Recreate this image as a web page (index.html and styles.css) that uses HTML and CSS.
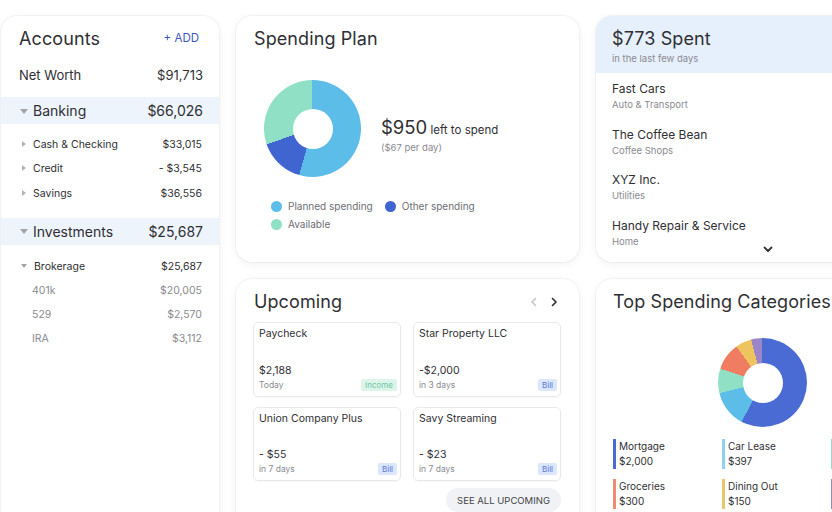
FILE: index.html
```html
<!DOCTYPE html>
<html lang="en">
	<head>
		<meta charset="UTF-8">
		<meta name="viewport" content="width=device-width, initial-scale=1.0">
		<title>Dashboard</title>
		<link rel="stylesheet" href="styles.css">
	</head>
	<body>
		<div class="page">
			<section class="card accounts">
				<div class="card-head">
					<h2>Accounts</h2>
					<a class="add" href="#">+ ADD</a>
				</div>
				<div class="row net"><span>Net Worth</span><span>$91,713</span></div>

				<div class="group-head"><span><i class="caret down"></i>Banking</span><span>$66,026</span></div>
				<div class="rows banking">
					<div class="row sub"><span><i class="caret right"></i>Cash &amp; Checking</span><span>$33,015</span></div>
					<div class="row sub"><span><i class="caret right"></i>Credit</span><span>- $3,545</span></div>
					<div class="row sub"><span><i class="caret right"></i>Savings</span><span>$36,556</span></div>
				</div>

				<div class="group-head"><span><i class="caret down"></i>Investments</span><span>$25,687</span></div>
				<div class="rows invest">
					<div class="row sub"><span><i class="caret down small"></i>Brokerage</span><span>$25,687</span></div>
					<div class="row leaf"><span>401k</span><span>$20,005</span></div>
					<div class="row leaf"><span>529</span><span>$2,570</span></div>
					<div class="row leaf"><span>IRA</span><span>$3,112</span></div>
				</div>
			</section>

			<section class="card plan">
				<div class="card-head"><h2>Spending Plan</h2></div>
				<div class="plan-body">
					<div class="donut plan-donut"></div>
					<div class="left">
						<p><span class="big">$950</span> left to spend</p>
						<p class="muted">($67 per day)</p>
					</div>
				</div>
				<ul class="legend">
					<li><i class="dot planned"></i>Planned spending</li>
					<li><i class="dot other"></i>Other spending</li>
					<li><i class="dot avail"></i>Available</li>
				</ul>
			</section>

			<section class="card spent">
				<div class="spent-head">
					<h2>$773 Spent</h2>
					<p class="muted">in the last few days</p>
				</div>
				<ul class="tx">
					<li><b>Fast Cars</b><span>Auto &amp; Transport</span></li>
					<li><b>The Coffee Bean</b><span>Coffee Shops</span></li>
					<li><b>XYZ Inc.</b><span>Utilities</span></li>
					<li><b>Handy Repair &amp; Service</b><span>Home</span></li>
				</ul>
				<div class="more">
					<svg width="10" height="7" viewBox="0 0 10 7"><path d="M1.5 1.5 5 5 8.5 1.5" fill="none" stroke="#333" stroke-width="1.8" stroke-linecap="round" stroke-linejoin="round"/></svg>
				</div>
			</section>

			<section class="card upcoming">
				<div class="card-head">
					<h2>Upcoming</h2>
					<div class="arrows">
						<svg width="8" height="10" viewBox="0 0 8 10"><path d="M5.5 1.5 2 5 5.5 8.5" fill="none" stroke="#c4c4c4" stroke-width="1.5" stroke-linecap="round" stroke-linejoin="round"/></svg>
						<svg width="8" height="10" viewBox="0 0 8 10"><path d="M2.5 1.5 6 5 2.5 8.5" fill="none" stroke="#333" stroke-width="1.7" stroke-linecap="round" stroke-linejoin="round"/></svg>
					</div>
				</div>
				<div class="bills">
					<div class="bill">
						<p class="bill-name">Paycheck</p>
						<p class="bill-amt">$2,188</p>
						<div class="bill-foot"><span>Today</span><span class="tag income">Income</span></div>
					</div>
					<div class="bill">
						<p class="bill-name">Star Property LLC</p>
						<p class="bill-amt">-$2,000</p>
						<div class="bill-foot"><span>in 3 days</span><span class="tag">Bill</span></div>
					</div>
					<div class="bill">
						<p class="bill-name">Union Company Plus</p>
						<p class="bill-amt">- $55</p>
						<div class="bill-foot"><span>in 7 days</span><span class="tag">Bill</span></div>
					</div>
					<div class="bill">
						<p class="bill-name">Savy Streaming</p>
						<p class="bill-amt">- $23</p>
						<div class="bill-foot"><span>in 7 days</span><span class="tag">Bill</span></div>
					</div>
				</div>
				<div class="see-all"><button>SEE ALL UPCOMING</button></div>
			</section>

			<section class="card categories">
				<div class="card-head"><h2>Top Spending Categories</h2></div>
				<div class="donut cat-donut"></div>
				<ul class="cats">
					<li class="mortgage">Mortgage<span>$2,000</span></li>
					<li class="lease">Car Lease<span>$397</span></li>
					<li class="utilities"></li>
					<li class="groceries">Groceries<span>$300</span></li>
					<li class="dining">Dining Out<span>$150</span></li>
					<li class="shopping"></li>
				</ul>
			</section>
		</div>
	</body>
</html>
```

FILE: styles.css
```css
:root{
	--text:#2f2f33;
	--muted:#8a8a90;
	--blue:#4a6bd4;
	--light-blue:#5cbde9;
	--mint:#8fe0c5;
	--band:#eef4fc;
}
body{
	margin:0;
	background:#fff;
	color:var(--text);
	font-family:Inter, "Noto Sans", sans-serif;
	overflow:hidden;
}
h2,p,ul{
	margin:0;
	padding:0;
}
ul{
	list-style:none;
}
.page{
	display:grid;
	grid-template-columns:218px 343px 343px;
	grid-template-rows:246px 260px;
	column-gap:17px;
	row-gap:17px;
	padding:16px 0 0 1px;
	width:940px;
}
.card{
	background:#fff;
	border-radius:16px;
	box-shadow:0 0 0 1px rgba(0,0,0,0.035), 0 2px 8px rgba(0,0,0,0.06);
	overflow:hidden;
}
.card-head{
	display:flex;
	justify-content:space-between;
	align-items:center;
	height:24px;
	padding:10px 16px 0 18px;
}
h2{
	font-size:18px;
	font-weight:400;
	letter-spacing:0.1px;
}
.muted{
	color:var(--muted);
	font-size:10px;
}

/* accounts */
.accounts{
	grid-row:1 / 3;
	height:520px;
}
.add{
	color:#3d55c4;
	font-size:11.5px;
	text-decoration:none;
	margin-right:4px;
}
.row{
	display:flex;
	justify-content:space-between;
	align-items:center;
	padding:0 16px 0 18px;
}
.net{
	height:20px;
	margin-top:15px;
	font-size:13px;
}
.group-head{
	display:flex;
	justify-content:space-between;
	align-items:center;
	height:27px;
	margin-top:12px;
	padding:0 16px 0 19px;
	background:var(--band);
	font-size:14px;
}
.banking{
	margin:8px 0 12px;
}
.invest{
	margin-top:10px;
}
.sub{
	height:24.5px;
	font-size:10.5px;
}
.invest .row{
	height:24px;
}
.leaf{
	font-size:10.5px;
	color:var(--muted);
	padding-left:31px;
	padding-right:17px;
}
.sub{
	padding-right:17px;
	padding-left:20px;
}
.caret{
	display:inline-block;
	width:0;
	height:0;
	vertical-align:middle;
}
.caret.down{
	border-left:4px solid transparent;
	border-right:4px solid transparent;
	border-top:5px solid #a4a4a8;
	margin:-2px 5px 0 0;
}
.caret.down.small{
	border-left-width:3px;
	border-right-width:3px;
	border-top-width:4px;
	margin:-2px 7px 0 0;
}
.caret.right{
	border-top:3px solid transparent;
	border-bottom:3px solid transparent;
	border-left:4px solid #b4b4b8;
	margin:-2px 7px 0 1px;
}

/* donuts */
.donut{
	position:relative;
	border-radius:50%;
}
.donut::after{
	content:"";
	position:absolute;
	left:50%;
	top:50%;
	width:40px;
	height:40px;
	margin:-20px 0 0 -20px;
	border-radius:50%;
	background:#fff;
}

/* spending plan */
.plan-body{
	display:flex;
	align-items:center;
	gap:20px;
	margin:30px 0 0 28px;
}
.plan-donut{
	width:97px;
	height:97px;
	background:conic-gradient(var(--light-blue) 0 196deg, #4065d1 196deg 251deg, var(--mint) 251deg 360deg);
}
.left{
	margin-top:12px;
}
.left p{
	font-size:11.5px;
}
.left .big{
	font-size:18.5px;
}
.left .muted{
	margin-top:4px;
	font-size:9.5px;
}
.legend{
	display:flex;
	flex-wrap:wrap;
	width:230px;
	margin:23px 0 0 35px;
	font-size:10px;
	color:#6e6e74;
	row-gap:6px;
	column-gap:12px;
}
.legend li{
	display:flex;
	align-items:center;
	gap:6px;
	height:12px;
}
.dot{
	width:11px;
	height:11px;
	border-radius:50%;
}
.dot.planned{ background:var(--light-blue); }
.dot.other{ background:#3f63d1; }
.dot.avail{ background:var(--mint); }

/* spent */
.spent-head{
	background:#e6effc;
	height:57px;
	padding:12px 16px 0 16px;
	box-sizing:border-box;
}
.spent-head .muted{
	margin-top:4px;
	font-size:9.5px;
}
.tx{
	padding:8px 16px 0 16px;
}
.tx li{
	display:flex;
	flex-direction:column;
	height:45.5px;
}
.tx b{
	font-weight:400;
	font-size:12px;
	line-height:16px;
}
.tx span{
	font-size:9.5px;
	color:var(--muted);
	line-height:16px;
}
.more{
	margin:-26px 0 0 167px;
}

/* upcoming */
.arrows{
	display:flex;
	gap:12px;
	margin-right:5px;
	margin-top:2px;
}
.bills{
	display:grid;
	grid-template-columns:148px 148px;
	grid-template-rows:75px 74px;
	column-gap:12px;
	row-gap:10px;
	margin:9px 0 0 17px;
}
.bill{
	display:flex;
	flex-direction:column;
	border:1px solid #e9e9ec;
	border-radius:5px;
	box-shadow:0 1px 2px rgba(0,0,0,0.04);
	padding:4px 3px 5px 5px;
}
.bill-name{
	font-size:10.5px;
	line-height:14px;
}
.bill-amt{
	margin-top:auto;
	font-size:10.5px;
	line-height:14px;
}
.bill-foot{
	display:flex;
	justify-content:space-between;
	align-items:center;
	font-size:8.5px;
	color:var(--muted);
	margin-top:1px;
}
.tag{
	background:#dde7fb;
	color:#5475d8;
	border-radius:2px;
	padding:1px 4px;
	line-height:10px;
	font-size:8px;
}
.tag.income{
	background:#ddf4eb;
	color:#6cc7a4;
}
.see-all{
	display:flex;
	justify-content:flex-end;
	padding-right:18px;
	margin-top:7px;
}
.see-all button{
	border:none;
	background:#f1f2f5;
	border-radius:12px;
	height:24px;
	padding:0 11px;
	font-family:inherit;
	font-size:9.5px;
	color:#444;
}

/* categories */
.categories .card-head{
	padding-left:17px;
}
.cat-donut{
	width:89px;
	height:89px;
	margin:25px 0 0 122px;
	background:conic-gradient(var(--blue) 0 208deg, var(--light-blue) 208deg 256deg, var(--mint) 256deg 288deg, #f07d62 288deg 324deg, #eec45f 324deg 345deg, #9a86c8 345deg 360deg);
}
.cats{
	display:grid;
	grid-template-columns:109px 109px 109px;
	row-gap:10px;
	margin:12px 0 0 17px;
}
.cats li{
	display:flex;
	flex-direction:column;
	border-left:3px solid var(--blue);
	padding-left:3px;
	font-size:10px;
	line-height:15px;
	height:30px;
}
.cats li.lease{ border-color:#8fd1ef; }
.cats li.utilities{ border-color:var(--mint); }
.cats li.groceries{ border-color:#ee8b74; }
.cats li.dining{ border-color:#ebc56b; }
.cats li.shopping{ border-color:#9a86c8; }
```
